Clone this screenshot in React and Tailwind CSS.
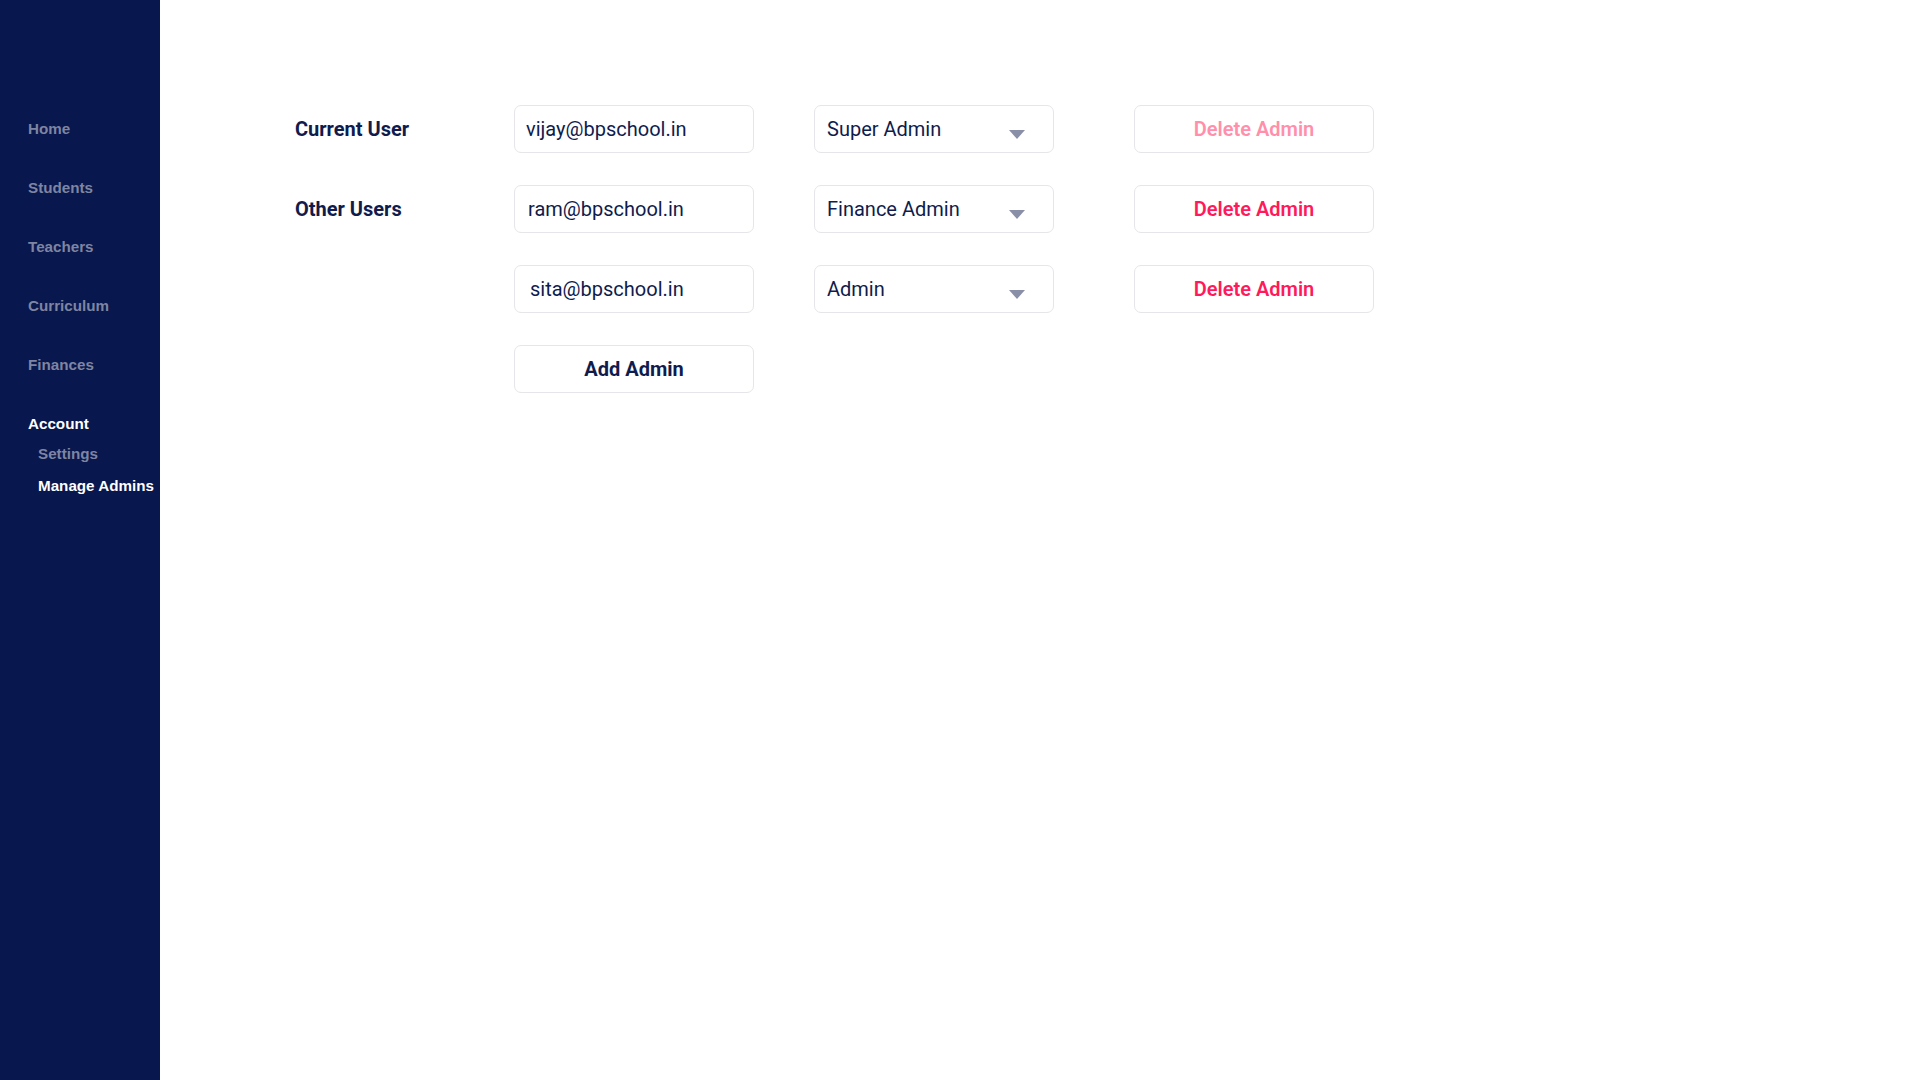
import React from "react";

function Arrow() {
  return (
    <svg width="16" height="9" viewBox="0 0 16 9" className="absolute right-[28px] top-[24px]">
      <path d="M0 0 L16 0 L8 9 Z" fill="#8a8fa8" />
    </svg>
  );
}

function Row({ label, email, role, disabled, pad }) {
  return (
    <div className="flex items-center h-[48px]">
      <div className="w-[219px] text-[20px] font-bold text-[#0f1c4d]">{label}</div>
      <div className={"w-[240px] h-[48px] border border-[#e6e6ea] rounded-[7px] flex items-center text-[20px] text-[#0f1c4d] " + pad}>
        {email}
      </div>
      <div className="relative ml-[60px] w-[240px] h-[48px] border border-[#e6e6ea] rounded-[7px] flex items-center pl-[12px] text-[20px] text-[#0f1c4d]">
        {role}
        <Arrow />
      </div>
      <div
        className={
          "ml-[80px] w-[240px] h-[48px] border border-[#e6e6ea] rounded-[7px] flex items-center justify-center text-[20px] font-semibold " +
          (disabled ? "text-[#ff8fab]" : "text-[#ff1a5b]")
        }
      >
        Delete Admin
      </div>
    </div>
  );
}

export default function App() {
  const items = ["Home", "Students", "Teachers", "Curriculum", "Finances"];
  return (
    <div className="flex w-[1920px] h-[1080px] bg-white" style={{ fontFamily: "Roboto, 'Liberation Sans', sans-serif" }}>
      <aside
        className="w-[160px] h-full bg-[#08174d] pt-[119px] pl-[28px] flex flex-col text-[15.2px] font-bold leading-[20px]"
        style={{ fontFamily: "'Liberation Sans', Arial, sans-serif" }}
      >
        {items.map((t) => (
          <div key={t} className="text-[#7e85a2] mb-[39px]">{t}</div>
        ))}
        <div className="text-white">Account</div>
        <div className="text-[#7e85a2] ml-[10px] mt-[10px]">Settings</div>
        <div className="text-white ml-[10px] mt-[12px] whitespace-nowrap">Manage Admins</div>
      </aside>
      <main className="flex-1 pt-[105px] pl-[135px] flex flex-col gap-[32px]">
        <Row label="Current User" email="vijay@bpschool.in" role="Super Admin" disabled pad="pl-[11px]" />
        <Row label="Other Users" email="ram@bpschool.in" role="Finance Admin" pad="pl-[13px]" />
        <Row label="" email="sita@bpschool.in" role="Admin" pad="pl-[15px]" />
        <div className="flex items-center h-[48px]">
          <div className="w-[219px]" />
          <div className="w-[240px] h-[48px] border border-[#e6e6ea] rounded-[7px] flex items-center justify-center text-[20px] font-bold text-[#0f1c4d]">
            Add Admin
          </div>
        </div>
      </main>
    </div>
  );
}
